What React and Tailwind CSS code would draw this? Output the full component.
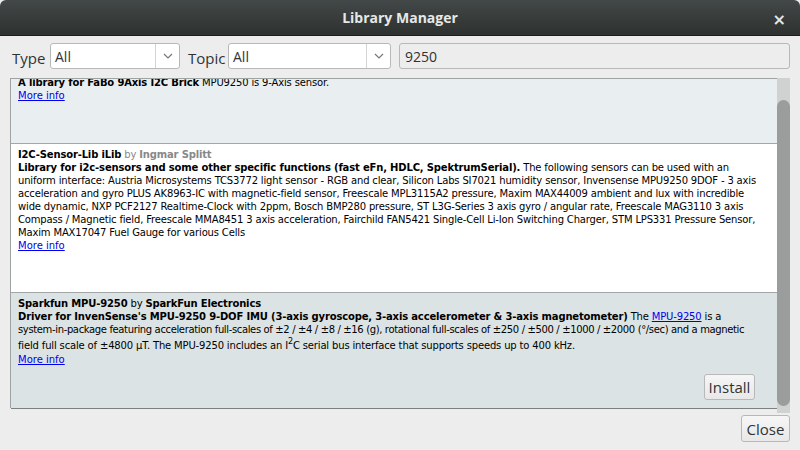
import React from "react";

function Chevron() {
  return (
    <svg width="10" height="6" viewBox="0 0 10 6" className="block">
      <path d="M1 1 L5 5 L9 1" fill="none" stroke="#777" strokeWidth="1.2" />
    </svg>
  );
}

function Select({ width }) {
  return (
    <div className={`flex h-[26px] ${width} items-stretch rounded-[3px] border border-[#b7b9b9] bg-white`}>
      <div className="flex flex-1 items-center pl-[4px] pt-[2px] text-[14px] text-[#2e3436]">All</div>
      <div className="flex w-[24px] items-center justify-center border-l border-[#d3d5d5]">
        <Chevron />
      </div>
    </div>
  );
}

function MoreInfo() {
  return <div className="tracking-normal"><a className="text-[#0000ee] underline">More info</a></div>;
}

function B({ children, className = "" }) {
  return <b className={className}>{children}</b>;
}

export default function App() {
  return (
    <div className="flex h-[450px] w-[800px] flex-col overflow-hidden bg-[#ededed] font-['DejaVu_Sans',sans-serif]">
      <div className="relative flex h-[36px] shrink-0 items-center justify-center rounded-t-[6px] bg-gradient-to-b from-[#434948] to-[#2d3130] border-b border-[#1c1e1e]">
        <span className="font-['Open_Sans',sans-serif] text-[14px] font-bold text-[#e6e8e7]">Library Manager</span>
        <span className="absolute right-[14px] top-[8px] text-[16px] font-bold text-[#e6e8e7]">×</span>
      </div>
      <div className="flex h-[34px] shrink-0 items-center pl-[12px] pr-[10px] pt-[5px] font-['Open_Sans',sans-serif]">
        <span className="mt-[5px] w-[38px] text-[15px] text-[#2e3436]">Type</span>
        <Select width="w-[130px]" />
        <span className="ml-[8px] mt-[5px] w-[40px] text-[15px] text-[#2e3436]">Topic</span>
        <Select width="w-[163px]" />
        <div className="ml-[8px] flex h-[26px] flex-1 items-center rounded-[3px] border border-[#b7b9b9] bg-[#ededed] pl-[5px] pt-[2px] text-[14px] text-[#2e3436]">9250</div>
      </div>
      <div className="flex h-[343px] shrink-0 pl-[10px] pr-[10px] pt-[8px]">
        <div className="mb-[5px] flex flex-1 flex-col overflow-hidden border-l border-t border-[#9ea3a3] shadow-[1px_1px_0_#7c8080] text-[10px] leading-[13px] tracking-[-0.16px] text-black whitespace-nowrap">
          <div className="h-[65px] shrink-0 bg-[#e9eff0] pl-[7px] pr-[4px] border-b border-[#a3a7a7]">
            <div className="-mt-[3px]"><B>A library for FaBo 9Axis I2C Brick</B> MPU9250 is 9-Axis sensor.</div>
            <MoreInfo />
          </div>
          <div className="h-[149px] shrink-0 bg-white pl-[7px] pr-[4px] pt-[4px] border-b border-[#a3a7a7]">
            <div><B>I2C-Sensor-Lib iLib</B> <span className="text-[#888]">by</span> <B className="text-[#888]">Ingmar Splitt</B></div>
            <div><B>Library for i2c-sensors and some other specific functions (fast eFn, HDLC, SpektrumSerial).</B> The following sensors can be used with an</div>
            <div>uniform interface: Austria Microsystems TCS3772 light sensor - RGB and clear, Silicon Labs SI7021 humidity sensor, Invensense MPU9250 9DOF - 3 axis</div>
            <div>acceleration and gyro PLUS AK8963-IC with magnetic-field sensor, Freescale MPL3115A2 pressure, Maxim MAX44009 ambient and lux with incredible</div>
            <div>wide dynamic, NXP PCF2127 Realtime-Clock with 2ppm, Bosch BMP280 pressure, ST L3G-Series 3 axis gyro / angular rate, Freescale MAG3110 3 axis</div>
            <div>Compass / Magnetic field, Freescale MMA8451 3 axis acceleration, Fairchild FAN5421 Single-Cell Li-Ion Switching Charger, STM LPS331 Pressure Sensor,</div>
            <div>Maxim MAX17047 Fuel Gauge for various Cells</div>
            <MoreInfo />
          </div>
          <div className="flex flex-1 flex-col bg-[#dce3e4] pl-[7px] pr-[4px] pt-[4px]">
            <div><B>Sparkfun MPU-9250</B> by <B>SparkFun Electronics</B></div>
            <div><B>Driver for InvenSense's MPU-9250 9-DOF IMU (3-axis gyroscope, 3-axis accelerometer &amp; 3-axis magnetometer)</B> The <a className="text-[#0000ee] underline">MPU-9250</a> is a</div>
            <div className="tracking-[-0.36px]">system-in-package featuring acceleration full-scales of ±2 / ±4 / ±8 / ±16 (g), rotational full-scales of ±250 / ±500 / ±1000 / ±2000 (°/sec) and a magnetic</div>
            <div className="pt-[3px]">field full scale of ±4800 µT. The MPU-9250 includes an I<span className="relative -top-[5px] text-[8px]">2</span>C serial bus interface that supports speeds up to 400 kHz.</div>
            <MoreInfo />
            <div className="mt-auto mb-[8px] flex justify-end pr-[18px]">
              <button className="h-[26px] w-[51px] rounded-[3px] border border-[#b7b9b9] bg-gradient-to-b from-[#f6f6f6] to-[#e8e8e8] pt-[1px] font-['Open_Sans',sans-serif] text-[15px] tracking-normal text-[#2e3436]">Install</button>
            </div>
          </div>
        </div>
        <div className="flex w-[13px] shrink-0 justify-center bg-[#d0d2d2] pt-[22px] pb-[7px]">
          <div className="w-[7px] flex-1 rounded-full bg-[#9b9d9d]"></div>
        </div>
      </div>
      <div className="flex flex-1 items-start justify-end pr-[10px] pt-[2px]">
        <button className="h-[27px] w-[49px] rounded-[3px] border border-[#b7b9b9] bg-gradient-to-b from-[#f6f6f6] to-[#e8e8e8] pt-[1px] font-['Open_Sans',sans-serif] text-[15px] text-[#2e3436]">Close</button>
      </div>
    </div>
  );
}
